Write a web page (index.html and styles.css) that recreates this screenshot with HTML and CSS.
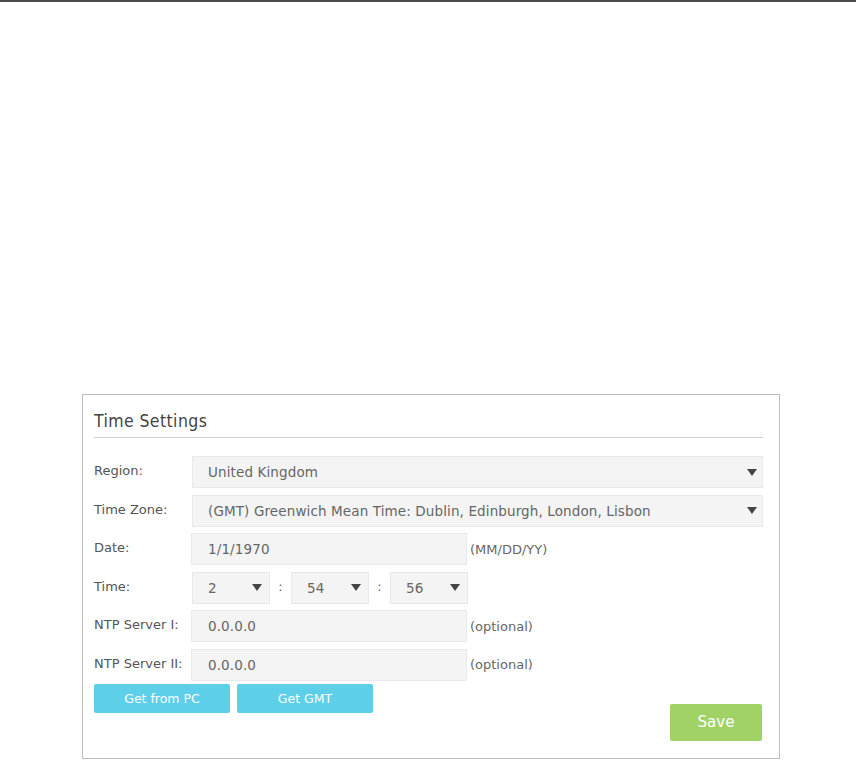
FILE: index.html
```html
<!DOCTYPE html>
<html>
<head>
<meta charset="utf-8">
<link rel="stylesheet" href="styles.css">
</head>
<body>
<div class="topline"></div>
<div class="page">
  <div class="panel">
    <div class="title">Time Settings</div>
    <div class="form">
      <div class="row">
        <div class="label">Region:</div>
        <div class="select wide"><span class="val">United Kingdom</span><span class="arrow"></span></div>
      </div>
      <div class="row">
        <div class="label">Time Zone:</div>
        <div class="select wide"><span class="val">(GMT) Greenwich Mean Time: Dublin, Edinburgh, London, Lisbon</span><span class="arrow"></span></div>
      </div>
      <div class="row">
        <div class="label">Date:</div>
        <div class="input">1/1/1970</div>
        <div class="hint">(MM/DD/YY)</div>
      </div>
      <div class="row">
        <div class="label">Time:</div>
        <div class="select small"><span class="val">2</span><span class="arrow"></span></div>
        <div class="colon">:</div>
        <div class="select small"><span class="val">54</span><span class="arrow"></span></div>
        <div class="colon">:</div>
        <div class="select small"><span class="val">56</span><span class="arrow"></span></div>
      </div>
      <div class="row">
        <div class="label">NTP Server I:</div>
        <div class="input">0.0.0.0</div>
        <div class="hint">(optional)</div>
      </div>
      <div class="row">
        <div class="label">NTP Server II:</div>
        <div class="input">0.0.0.0</div>
        <div class="hint">(optional)</div>
      </div>
    </div>
    <div class="footer">
      <div class="btns">
        <div class="btn blue">Get from PC</div>
        <div class="btn blue">Get GMT</div>
      </div>
      <div class="btn save">Save</div>
    </div>
  </div>
</div>
</body>
</html>
```

FILE: styles.css
```css
html, body {
  margin: 0;
  padding: 0;
  background: #ffffff;
}
body {
  font-family: "DejaVu Sans", Verdana, sans-serif;
  font-size: 13px;
  color: #555555;
}
.topline {
  height: 2px;
  background: #4b4b4b;
}
.page {
  padding: 392px 0 0 82px;
}
.panel {
  border: 1px solid #bdbdbd;
  padding: 10px 16px 17px 11px;
  box-sizing: content-box;
  width: 669px;
}
.title {
  font-family: "DejaVu Sans Condensed", "DejaVu Sans", sans-serif;
  font-size: 17.5px;
  letter-spacing: 0.4px;
  line-height: 32px;
  height: 32px;
  color: #444444;
  border-bottom: 1px solid #cfcfcf;
}
.form {
  margin-top: 18px;
  display: flex;
  flex-direction: column;
  gap: 6.6px;
}
.row {
  display: flex;
  align-items: center;
  height: 32px;
}
.label {
  width: 98px;
  flex: none;
  color: #555555;
  margin-top: -3px;
}
.select, .input {
  box-sizing: border-box;
  height: 32px;
  background: #f4f4f4;
  border: 1px solid #e9e9e9;
  display: flex;
  align-items: center;
  color: #666666;
  font-size: 13.5px;
  letter-spacing: 0.12px;
}
.select {
  justify-content: space-between;
  padding: 0 5px 0 15px;
}
.select.wide {
  flex: 1;
}
.select.small {
  width: 78px;
  padding-right: 7px;
}
.val {
  white-space: nowrap;
}
.arrow {
  width: 0;
  height: 0;
  border-left: 5px solid transparent;
  border-right: 5px solid transparent;
  border-top: 7px solid #454545;
}
.input {
  width: 276px;
  margin-left: -1px;
  padding-left: 16px;
}
.hint {
  margin-left: 3px;
  color: #666666;
}
.colon {
  width: 21px;
  text-align: center;
  color: #666666;
  margin-top: -3px;
}
.footer {
  margin-top: 3px;
  display: flex;
  justify-content: space-between;
  align-items: flex-start;
}
.btns {
  display: flex;
  gap: 7px;
}
.btn {
  color: #ffffff;
  border-radius: 2px;
  display: flex;
  align-items: center;
  justify-content: center;
}
.blue {
  width: 136px;
  height: 29px;
  background: #5dcfe8;
  font-size: 12.5px;
}
.save {
  margin-top: 20px;
  margin-right: 1px;
  width: 92px;
  height: 37px;
  background: #a1d266;
  font-size: 15px;
}
```
